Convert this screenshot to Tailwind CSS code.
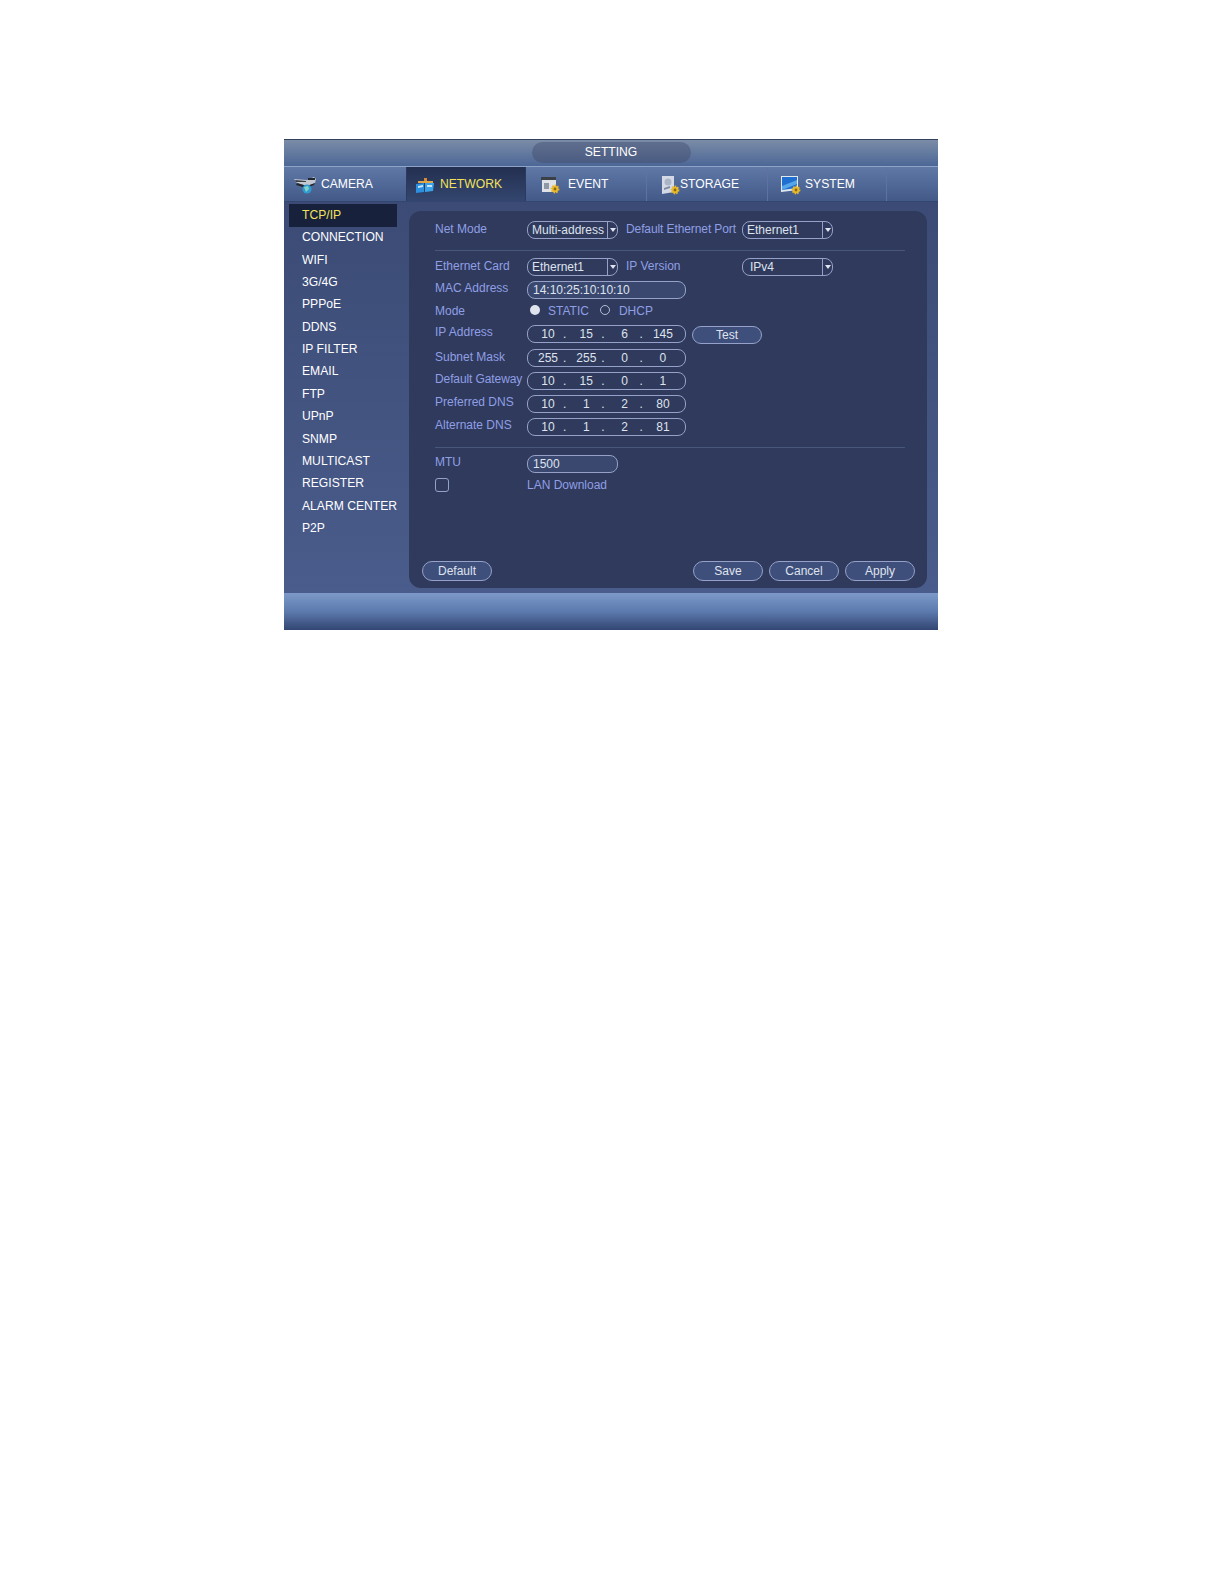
<!doctype html>
<html lang="en">
<head>
<meta charset="UTF-8" />
<title>SETTING</title>
<script src="https://cdn.jsdelivr.net/npm/@tailwindcss/browser@4"></script>
</head>
<body class="bg-white font-['Liberation_Sans',Arial,sans-serif] text-[12.15px] leading-none">
<div class="pt-[139px] pl-[284px]">
  <div class="w-[654px] h-[491px] flex flex-col bg-[#42557f]">

    <!-- title bar -->
    <div class="h-[27px] border-t border-[#33415f] bg-gradient-to-b from-[#7b8ca6] to-[#4c6797] flex justify-center pt-[2px] shrink-0">
      <div class="w-[159px] h-[21px] rounded-full bg-gradient-to-b from-[#5f6e8d] to-[#4b5c83] text-white flex items-center justify-center">SETTING</div>
    </div>

    <!-- tabs -->
    <div class="h-[36px] shrink-0 flex border-t border-[#8ea3c6] border-b-[#33466f] border-b bg-gradient-to-b from-[#5f78a6] to-[#435a89] text-white">
      <div class="w-[122px] flex items-center pl-[10px]">
        <svg class="w-[22px] h-[18px] mr-[5px] mt-[2px]" viewBox="0 0 22 18">
          <path d="M0 3 L13 4 L20 1 L22 3 L21 7 L13 10 L3 7 Z" fill="#c3c8d0" />
          <path d="M3 7 L13 10 L21 7 L20 9 L12 12 L2 9 Z" fill="#23272e" />
          <path d="M1 4 L12 5 L12 6 L2 6 Z" fill="#3a3f48" />
          <rect x="14" y="2" width="7" height="2" fill="#23272e" />
          <circle cx="13" cy="13" r="4.5" fill="#2f9bd0" />
          <path d="M10 11 L14 10 L15 13 L12 16 Z" fill="#7fd6c8" />
        </svg>
        <span>CAMERA</span>
      </div>
      <div class="w-[120px] flex items-center pl-[9px] bg-gradient-to-b from-[#232f50] to-[#34466f] border-x border-[#2c3a5e] text-[#f3e35c]">
        <svg class="w-[18px] h-[15px] mr-[6px] mt-[2px]" viewBox="0 0 18 15">
          <rect x="8" y="0" width="3" height="4" fill="#d98a2b" />
          <rect x="2" y="3" width="15" height="2" fill="#e0a545" />
          <path d="M0 6 L8 5 L8 14 L0 15 Z" fill="#2c8fe0" />
          <path d="M9 5 L18 5 L17 13 L9 14 Z" fill="#3ba2ea" />
          <path d="M2 8 L7 7 L7 9 L2 10 Z M11 7 L16 7 L16 9 L11 9 Z" fill="#c6e6fb" />
        </svg>
        <span>NETWORK</span>
      </div>
      <div class="w-[121px] flex items-center pl-[15px] border-r border-[#5e74a0]">
        <svg class="w-[19px] h-[17px] mr-[8px] mt-[2px]" viewBox="0 0 19 17">
          <rect x="0" y="0" width="15" height="3" fill="#3b3f46" />
          <rect x="1" y="3" width="14" height="12" fill="#dfe3e8" />
          <path d="M3 6 H8 V12 H3 Z" fill="#8f98a6" />
          <circle cx="14" cy="12" r="3.2" fill="#eab92b" stroke="#eab92b" stroke-width="2.4" stroke-dasharray="1.4 1" />
          <circle cx="14" cy="12" r="1.4" fill="#8a6a12" />
        </svg>
        <span>EVENT</span>
      </div>
      <div class="w-[121px] flex items-center pl-[15px] border-r border-[#5e74a0]">
        <svg class="w-[18px] h-[19px] mt-[3px]" viewBox="0 0 18 19">
          <path d="M0 0 H12 V16 L0 18 Z" fill="#d3dae6" />
          <circle cx="6" cy="6" r="3.5" fill="#aab4c6" />
          <path d="M2 12 L8 10 L8 12 L2 14 Z" fill="#7f8aa0" />
          <circle cx="13" cy="14" r="3.2" fill="#eab92b" stroke="#eab92b" stroke-width="2.4" stroke-dasharray="1.4 1" />
          <circle cx="13" cy="14" r="1.4" fill="#8a6a12" />
        </svg>
        <span>STORAGE</span>
      </div>
      <div class="w-[119px] flex items-center pl-[13px] border-r border-[#5e74a0]">
        <svg class="w-[20px] h-[19px] mr-[4px] mt-[2px]" viewBox="0 0 20 19">
          <path d="M0 0 H17 V14 L0 16 Z" fill="#e2e8f0" />
          <path d="M1 1 H16 V12 L1 14 Z" fill="#1f6fd0" />
          <path d="M1 10 L16 4 V8 L1 14 Z" fill="#58a6ea" />
          <circle cx="15" cy="14" r="3.2" fill="#eab92b" stroke="#eab92b" stroke-width="2.4" stroke-dasharray="1.4 1" />
          <circle cx="15" cy="14" r="1.4" fill="#8a6a12" />
        </svg>
        <span>SYSTEM</span>
      </div>
    </div>

    <!-- main -->
    <div class="flex-1 flex min-h-0 pt-[2px] bg-gradient-to-b from-[#3b4b75] to-[#4a5c8b]">
      <div class="w-[125px] pl-[5px] text-white shrink-0">
        <div class="h-[23px] w-[108px] -mb-[1px] bg-[#17213c] text-[#f3e35c] pl-[13px] flex items-center">TCP/IP</div>
        <div class="h-[22.4px] pl-[13px] flex items-center">CONNECTION</div>
        <div class="h-[22.4px] pl-[13px] flex items-center">WIFI</div>
        <div class="h-[22.4px] pl-[13px] flex items-center">3G/4G</div>
        <div class="h-[22.4px] pl-[13px] flex items-center">PPPoE</div>
        <div class="h-[22.4px] pl-[13px] flex items-center">DDNS</div>
        <div class="h-[22.4px] pl-[13px] flex items-center">IP FILTER</div>
        <div class="h-[22.4px] pl-[13px] flex items-center">EMAIL</div>
        <div class="h-[22.4px] pl-[13px] flex items-center">FTP</div>
        <div class="h-[22.4px] pl-[13px] flex items-center">UPnP</div>
        <div class="h-[22.4px] pl-[13px] flex items-center">SNMP</div>
        <div class="h-[22.4px] pl-[13px] flex items-center">MULTICAST</div>
        <div class="h-[22.4px] pl-[13px] flex items-center">REGISTER</div>
        <div class="h-[22.4px] pl-[13px] flex items-center whitespace-nowrap">ALARM CENTER</div>
        <div class="h-[22.4px] pl-[13px] flex items-center">P2P</div>
      </div>

      <!-- panel -->
      <div class="w-[518px] h-[377px] mt-[7px] rounded-[12px] bg-[#2f3a5c] pt-[10px] pl-[26px] flex flex-col text-[12px] text-[#8f9fe6]">
        <div class="flex items-center h-[18px]">
          <div class="w-[92px] -mt-[3px]">Net Mode</div>
          <div class="w-[91px] h-[18px] rounded-[8px] border border-[#95a1c8] flex items-center text-[#dfe3ee] pl-[4px]">
            <span class="w-[75px]">Multi-address</span>
            <span class="h-full flex-1 border-l border-[#95a1c8] flex items-center justify-center">
              <span class="border-x-[3px] border-x-transparent border-t-[4px] border-t-[#dfe4f0]"></span>
            </span>
          </div>
          <div class="w-[116px] ml-[8px] -mt-[3px] whitespace-nowrap tracking-[-0.1px]">Default Ethernet Port</div>
          <div class="w-[91px] h-[18px] rounded-[8px] border border-[#95a1c8] flex items-center text-[#dfe3ee] pl-[4px]">
            <span class="w-[75px]">Ethernet1</span>
            <span class="h-full flex-1 border-l border-[#95a1c8] flex items-center justify-center">
              <span class="border-x-[3px] border-x-transparent border-t-[4px] border-t-[#dfe4f0]"></span>
            </span>
          </div>
        </div>
        <div class="w-[470px] h-px bg-[#49567c] mt-[11px] mb-[7px]"></div>

        <div class="flex items-start h-[23px]">
          <div class="w-[92px] mt-[2px]">Ethernet Card</div>
          <div class="w-[91px] h-[18px] rounded-[8px] border border-[#95a1c8] flex items-center text-[#dfe3ee] pl-[4px]">
            <span class="w-[75px]">Ethernet1</span>
            <span class="h-full flex-1 border-l border-[#95a1c8] flex items-center justify-center">
              <span class="border-x-[3px] border-x-transparent border-t-[4px] border-t-[#dfe4f0]"></span>
            </span>
          </div>
          <div class="w-[116px] ml-[8px] mt-[2px]">IP Version</div>
          <div class="w-[91px] h-[18px] rounded-[8px] border border-[#95a1c8] flex items-center text-[#dfe3ee] pl-[7px]">
            <span class="w-[72px]">IPv4</span>
            <span class="h-full flex-1 border-l border-[#95a1c8] flex items-center justify-center">
              <span class="border-x-[3px] border-x-transparent border-t-[4px] border-t-[#dfe4f0]"></span>
            </span>
          </div>
        </div>
        <div class="flex items-start h-[22px]">
          <div class="w-[92px] mt-[1px]">MAC Address</div>
          <div class="w-[159px] h-[18px] rounded-[8px] border border-[#95a1c8] bg-[#3a4870] flex items-center text-[#dfe3ee] pl-[5px]">14:10:25:10:10:10</div>
        </div>
        <div class="flex items-center h-[22px] pb-[6px]">
          <div class="w-[92px]">Mode</div>
          <span class="w-[10px] h-[10px] rounded-full bg-[#dfe3ee] ml-[3px] -mt-[2px]"></span>
          <span class="ml-[8px]">STATIC</span>
          <span class="w-[10px] h-[10px] rounded-full border border-[#b4bdd8] ml-[11px] -mt-[2px]"></span>
          <span class="ml-[9px]">DHCP</span>
        </div>

        <div class="flex items-start h-[24px]">
          <div class="w-[92px] mt-[1px]">IP Address</div>
          <div class="w-[159px] h-[18px] rounded-[8px] border border-[#95a1c8] flex items-center text-[#dfe3ee] pl-[5px]">
            <span class="w-[30px] text-center">10</span><span class="w-[8.3px]">.</span><span class="w-[30px] text-center">15</span><span class="w-[8.3px]">.</span><span class="w-[30px] text-center">6</span><span class="w-[8.3px]">.</span><span class="w-[30px] text-center">145</span>
          </div>
          <div class="w-[70px] h-[18px] ml-[6px] rounded-[10px] border border-[#95a1c8] bg-[#3f4f7c] flex items-center justify-center text-[#dfe3ee] mt-[1px]">Test</div>
        </div>
        <div class="flex items-start h-[23px]">
          <div class="w-[92px] mt-[2px]">Subnet Mask</div>
          <div class="w-[159px] h-[18px] rounded-[8px] border border-[#95a1c8] flex items-center text-[#dfe3ee] pl-[5px]">
            <span class="w-[30px] text-center">255</span><span class="w-[8.3px]">.</span><span class="w-[30px] text-center">255</span><span class="w-[8.3px]">.</span><span class="w-[30px] text-center">0</span><span class="w-[8.3px]">.</span><span class="w-[30px] text-center">0</span>
          </div>
        </div>
        <div class="flex items-start h-[23px]">
          <div class="w-[92px] mt-[1px] whitespace-nowrap tracking-[-0.1px]">Default Gateway</div>
          <div class="w-[159px] h-[18px] rounded-[8px] border border-[#95a1c8] flex items-center text-[#dfe3ee] pl-[5px]">
            <span class="w-[30px] text-center">10</span><span class="w-[8.3px]">.</span><span class="w-[30px] text-center">15</span><span class="w-[8.3px]">.</span><span class="w-[30px] text-center">0</span><span class="w-[8.3px]">.</span><span class="w-[30px] text-center">1</span>
          </div>
        </div>
        <div class="flex items-start h-[23px]">
          <div class="w-[92px] mt-[1px]">Preferred DNS</div>
          <div class="w-[159px] h-[18px] rounded-[8px] border border-[#95a1c8] flex items-center text-[#dfe3ee] pl-[5px]">
            <span class="w-[30px] text-center">10</span><span class="w-[8.3px]">.</span><span class="w-[30px] text-center">1</span><span class="w-[8.3px]">.</span><span class="w-[30px] text-center">2</span><span class="w-[8.3px]">.</span><span class="w-[30px] text-center">80</span>
          </div>
        </div>
        <div class="flex items-start h-[18px]">
          <div class="w-[92px] mt-[1px]">Alternate DNS</div>
          <div class="w-[159px] h-[18px] rounded-[8px] border border-[#95a1c8] flex items-center text-[#dfe3ee] pl-[5px]">
            <span class="w-[30px] text-center">10</span><span class="w-[8.3px]">.</span><span class="w-[30px] text-center">1</span><span class="w-[8.3px]">.</span><span class="w-[30px] text-center">2</span><span class="w-[8.3px]">.</span><span class="w-[30px] text-center">81</span>
          </div>
        </div>

        <div class="w-[470px] h-px bg-[#49567c] mt-[11px] mb-[7px]"></div>
        <div class="flex items-center h-[18px]">
          <div class="w-[92px] -mt-[4px]">MTU</div>
          <div class="w-[91px] h-[18px] rounded-[8px] border border-[#95a1c8] bg-[#3a4870] flex items-center text-[#dfe3ee] pl-[5px]">1500</div>
        </div>
        <div class="flex items-center h-[14px] mt-[5px]">
          <div class="w-[92px]"><div class="w-[14px] h-[14px] rounded-[3px] border border-[#95a1c8]"></div></div>
          <span>LAN Download</span>
        </div>

        <div class="flex items-center mt-auto mb-[7px] -ml-[13px] w-[493px] text-[#dfe3ee]">
          <div class="w-[70px] h-[20px] rounded-[10px] border border-[#95a1c8] bg-[#3f4f7c] flex items-center justify-center">Default</div>
          <div class="w-[70px] h-[20px] ml-auto rounded-[10px] border border-[#95a1c8] bg-[#3f4f7c] flex items-center justify-center">Save</div>
          <div class="w-[70px] h-[20px] ml-[6px] rounded-[10px] border border-[#95a1c8] bg-[#3f4f7c] flex items-center justify-center">Cancel</div>
          <div class="w-[70px] h-[20px] ml-[6px] rounded-[10px] border border-[#95a1c8] bg-[#3f4f7c] flex items-center justify-center">Apply</div>
        </div>
      </div>
    </div>

    <!-- footer -->
    <div class="h-[37px] shrink-0 bg-gradient-to-b from-[#7c99c9] via-[#5d7aae] to-[#324672]"></div>
  </div>
</div>
</body>
</html>
